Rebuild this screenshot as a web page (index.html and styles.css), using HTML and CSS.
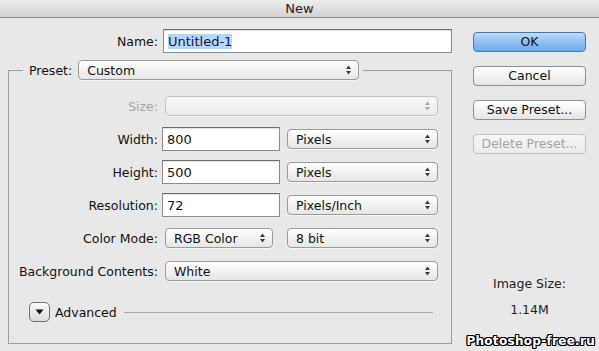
FILE: index.html
```html
<!DOCTYPE html>
<html lang="en">
<head>
    <meta charset="UTF-8">
    <meta name="viewport" content="width=device-width, initial-scale=1.0">
    <title>New</title>
    <link rel="stylesheet" href="styles.css">
</head>
<body>

    <div class="titlebar">New</div>

    <div class="dialog">
        <div class="left">
            <div class="name-row">
                <span class="lbl name-lbl">Name:</span>
                <div class="field name-field"><span class="selected">Untitled-1</span></div>
            </div>

            <fieldset class="preset">
                <legend class="preset-legend">
                    <span class="legend-lbl">Preset:</span>
                    <span class="popup preset-pop">Custom
                        <svg class="arrows" width="7" height="10" viewBox="0 0 7 10"><polygon points="3.5,0.5 1,4 6,4"/><polygon points="1,6 6,6 3.5,9.5"/></svg>
                    </span>
                </legend>

                <div class="row row-size">
                    <span class="lbl disabled">Size:</span>
                    <span class="popup popup-disabled wide"><span></span>
                        <svg class="arrows" width="7" height="10" viewBox="0 0 7 10"><polygon points="3.5,0.5 1,4 6,4"/><polygon points="1,6 6,6 3.5,9.5"/></svg>
                    </span>
                </div>

                <div class="row">
                    <span class="lbl">Width:</span>
                    <div class="field num-field">800</div>
                    <span class="popup unit">Pixels
                        <svg class="arrows" width="7" height="10" viewBox="0 0 7 10"><polygon points="3.5,0.5 1,4 6,4"/><polygon points="1,6 6,6 3.5,9.5"/></svg>
                    </span>
                </div>

                <div class="row">
                    <span class="lbl">Height:</span>
                    <div class="field num-field">500</div>
                    <span class="popup unit">Pixels
                        <svg class="arrows" width="7" height="10" viewBox="0 0 7 10"><polygon points="3.5,0.5 1,4 6,4"/><polygon points="1,6 6,6 3.5,9.5"/></svg>
                    </span>
                </div>

                <div class="row">
                    <span class="lbl">Resolution:</span>
                    <div class="field num-field">72</div>
                    <span class="popup unit">Pixels/Inch
                        <svg class="arrows" width="7" height="10" viewBox="0 0 7 10"><polygon points="3.5,0.5 1,4 6,4"/><polygon points="1,6 6,6 3.5,9.5"/></svg>
                    </span>
                </div>

                <div class="row">
                    <span class="lbl">Color Mode:</span>
                    <span class="popup mode">RGB Color
                        <svg class="arrows" width="7" height="10" viewBox="0 0 7 10"><polygon points="3.5,0.5 1,4 6,4"/><polygon points="1,6 6,6 3.5,9.5"/></svg>
                    </span>
                    <span class="popup unit">8 bit
                        <svg class="arrows" width="7" height="10" viewBox="0 0 7 10"><polygon points="3.5,0.5 1,4 6,4"/><polygon points="1,6 6,6 3.5,9.5"/></svg>
                    </span>
                </div>

                <div class="row">
                    <span class="lbl">Background Contents:</span>
                    <span class="popup wide">White
                        <svg class="arrows" width="7" height="10" viewBox="0 0 7 10"><polygon points="3.5,0.5 1,4 6,4"/><polygon points="1,6 6,6 3.5,9.5"/></svg>
                    </span>
                </div>

                <div class="advanced">
                    <span class="disclosure">
                        <svg width="9" height="6" viewBox="0 0 9 6"><polygon points="0.5,0.5 8.5,0.5 4.5,5.5"/></svg>
                    </span>
                    <span class="adv-lbl">Advanced</span>
                    <span class="adv-line"></span>
                </div>
            </fieldset>
        </div>

        <div class="right">
            <div class="btn btn-default">OK</div>
            <div class="btn">Cancel</div>
            <div class="btn">Save Preset...</div>
            <div class="btn btn-disabled">Delete Preset...</div>

            <div class="img-size">Image Size:</div>
            <div class="img-value">1.14M</div>
        </div>
    </div>

    <div class="watermark">Photoshop-free.ru</div>

</body>
</html>
```

FILE: styles.css
```css
body {
    margin: 0;
    width: 599px;
    height: 351px;
    overflow: hidden;
    background-color: #e8e8e8;
    font-family: "DejaVu Sans", Verdana, sans-serif;
    font-size: 12.5px;
    color: #111;
    position: relative;
}

.titlebar {
    height: 17px;
    line-height: 17px;
    text-align: center;
    font-size: 13px;
    color: #222;
    background: linear-gradient(#eeeeee, #d2d2d2);
    border-bottom: 1px solid #8e8e8e;
}

.dialog {
    display: flex;
    padding-left: 8px;
}

.left {
    width: 444px;
}

.name-row {
    display: flex;
    align-items: center;
    margin-top: 11px;
    height: 24px;
}

.lbl {
    text-align: right;
    flex: none;
    white-space: nowrap;
}

.name-lbl {
    width: 150px;
    margin-right: 5px;
}

.disabled {
    color: #a4a4a4;
}

.field {
    box-sizing: border-box;
    height: 24px;
    background: #fff;
    border: 1px solid #8c8c8c;
    border-top-color: #6e6e6e;
    box-shadow: inset 0 1px 1px rgba(0, 0, 0, 0.12);
    padding: 0 4px;
    display: flex;
    align-items: center;
    flex: none;
}

.name-field {
    width: 289px;
    font-size: 13px;
}

.selected {
    background-color: #b5d5fd;
    color: #0d1a3a;
}

.preset {
    box-sizing: border-box;
    width: 444px;
    height: 284px;
    margin: 7px 0 0;
    padding: 0;
    border: 1px solid #9c9c9c;
}

.preset-legend {
    display: flex;
    align-items: center;
    margin-left: 14px;
    padding: 0 4px 0 6px;
}

.legend-lbl {
    margin-right: 6px;
}

.popup {
    box-sizing: border-box;
    height: 20px;
    display: flex;
    align-items: center;
    justify-content: space-between;
    padding: 0 6px 0 8px;
    border: 1px solid #9a9a9a;
    border-radius: 4px;
    background: linear-gradient(#ffffff, #f2f2f2 50%, #e6e6e6);
    box-shadow: 0 1px 0 rgba(255, 255, 255, 0.6);
    flex: none;
}

.arrows {
    fill: #3a3a3a;
}

.preset-pop {
    width: 281px;
}

.popup-disabled {
    border-color: #c2c2c2;
    background: linear-gradient(#f6f6f6, #ececec);
}

.popup-disabled .arrows {
    fill: #a8a8a8;
}

.row {
    display: flex;
    align-items: center;
    height: 24px;
    margin-top: 9px;
}

.row .lbl {
    width: 149px;
    margin-right: 7px;
}

.row-size {
    margin-top: 14px;
}

.wide {
    width: 273px;
}

.num-field {
    width: 118px;
    margin-left: -3px;
    margin-right: 7px;
    font-size: 13px;
}

.unit {
    width: 151px;
}

.mode {
    width: 108px;
    margin-right: 14px;
}

.advanced {
    display: flex;
    align-items: center;
    height: 20px;
    margin: 19px 0 0 20px;
}

.disclosure {
    box-sizing: border-box;
    width: 21px;
    height: 20px;
    border: 1px solid #6f6f6f;
    border-radius: 5px;
    background: linear-gradient(#fafafa, #dcdcdc);
    display: flex;
    align-items: center;
    justify-content: center;
}

.disclosure svg {
    fill: #111;
}

.adv-lbl {
    margin-left: 5px;
    font-size: 12.5px;
}

.adv-line {
    width: 309px;
    height: 1px;
    margin-left: 7px;
    background-color: #a9a9a9;
}

.right {
    width: 113px;
    margin-left: 21px;
    padding-top: 14px;
    display: flex;
    flex-direction: column;
}

.btn {
    box-sizing: border-box;
    height: 20px;
    margin-bottom: 14px;
    border: 1px solid #8f8f8f;
    border-radius: 4px;
    background: linear-gradient(#ffffff, #f3f3f3 50%, #e4e4e4);
    text-align: center;
    line-height: 18px;
    font-size: 12.5px;
}

.btn-default {
    border-color: #4b74a8;
    background: linear-gradient(#bfdcf8, #8dc0f2 50%, #6eabec);
}

.btn-disabled {
    color: #a2a2a2;
    border-color: #c0c0c0;
    background: linear-gradient(#f6f6f6, #ececec);
}

.img-size {
    margin-top: 108px;
    text-align: center;
    line-height: 15px;
    color: #222;
}

.img-value {
    margin-top: 11px;
    text-align: center;
    line-height: 15px;
    color: #222;
}

.watermark {
    position: absolute;
    right: 4px;
    bottom: 4px;
    font-family: "DejaVu Sans", sans-serif;
    font-weight: bold;
    font-size: 12px;
    line-height: 12px;
    letter-spacing: 0.3px;
    color: #fff;
    text-shadow: 1px 0 0 #000, -1px 0 0 #000, 0 1px 0 #000, 0 -1px 0 #000,
                 1px 1px 0 #000, -1px -1px 0 #000, 1px -1px 0 #000, -1px 1px 0 #000;
}
```
